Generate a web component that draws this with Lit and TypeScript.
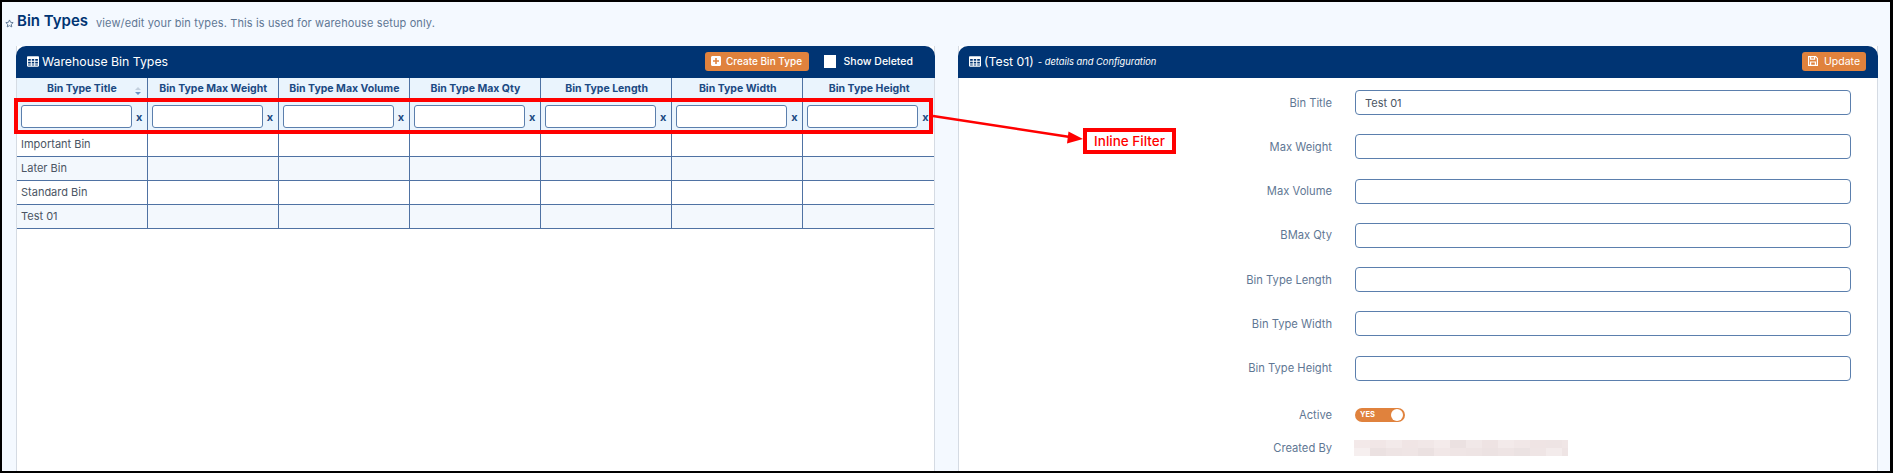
import { LitElement, html, css, svg } from "lit";
import { customElement } from "lit/decorators.js";

const COLS = ["Bin Type Title","Bin Type Max Weight","Bin Type Max Volume","Bin Type Max Qty","Bin Type Length","Bin Type Width","Bin Type Height"];
const ROWS = ["Important Bin","Later Bin","Standard Bin","Test 01"];
const FIELDS: [string,string][] = [["Bin Title","Test 01"],["Max Weight",""],["Max Volume",""],["BMax Qty",""],["Bin Type Length",""],["Bin Type Width",""],["Bin Type Height",""]];
const BLUR = ["#f3e9e9","#f1e6e6","#f3eaea","#f0e5e5","#f1e7e7","#f4ebeb","#ebe1e1","#f1e8e8","#eee3e3","#f3eaea","#f1e7e7","#efe4e4","#eee4e4","#f0e6e6",
"#f6efef","#ebe1e1","#eee4e4","#efe5e5","#ebe1e1","#f1e7e7","#efe5e5","#eee4e4","#ece2e2","#eee4e4","#ebe2e2","#efe5e5","#f3ebeb","#eee4e4"];

const tableIcon = svg`<svg class="ti" viewBox="0 0 14 12"><path fill="currentColor" fill-rule="evenodd" d="M1.2 0h11.6C13.5 0 14 .5 14 1.2v9.6c0 .7-.5 1.2-1.2 1.2H1.2C.5 12 0 11.500 0 10.800V1.200C0 .5.500 0 1.200 0zM1.300 3.200v2h3.100v-2zm4.300 0v2h2.800v-2zm4 0v2h3.100v-2zM1.300 6.300v2h3.100v-2zm4.300 0v2h2.800v-2zm4 0v2h3.100v-2zM1.300 9.400v1.300h3.100V9.400zm4.300 0v1.300h2.800V9.400zm4 0v1.300h3.100V9.400z"/></svg>`;

@customElement("app-root")
export class AppRoot extends LitElement {
  static styles = css`
    :host { display:block; position:relative; box-sizing:border-box; width:1893px; height:473px; overflow:hidden;
      background:#f4f9ff; border:solid #000; border-width:2px 3px 2px 2px; font-family:Inter,"Liberation Sans",sans-serif; color:#003473; }
    .top { display:flex; align-items:center; height:40px; padding-left:3px; box-sizing:border-box; }
    .star { width:9px; height:9px; margin-right:3px; margin-top:3px; color:#56708f; }
    h1 { margin:0; font-size:15px; line-height:20px; font-weight:600; color:#003473; margin-top:-2px; }
    .sub { margin-left:8px; font-size:11px; letter-spacing:.12px; color:#5f7794; margin-top:2px; }
    .cols { display:flex; gap:23px; margin:4px 12px 0 14px; align-items:stretch; }
    .panel { background:#fff; height:440px; box-sizing:border-box; border:solid #d5dbe3; border-width:0 1px; }
    .left { width:919px; flex:none; }
    .right { width:920px; flex:none; }
    .hdr { display:flex; align-items:center; height:32px; margin:0 -1px; padding:0 0 2px 11px; background:#003473; color:#fff; border-radius:10px 10px 0 0; font-size:12.300px; box-sizing:border-box; }
    .ti { width:12px; height:11px; margin-right:3px; flex:none; }
    .hdr .t { white-space:nowrap; }
    .hdr i { font-size:9.300px; margin-left:4px; white-space:nowrap; }
    .sp { flex:1; }
    .btn { display:flex; align-items:center; justify-content:center; gap:5px; height:19px; background:#e0823d; color:#fff; border:0; border-radius:3px; font:500 10px Inter,sans-serif; padding:0; }
    .create { width:104px; }
    .update { width:64px; margin-right:12px; font-size:10.500px; font-weight:400; gap:6px; }
    .btn svg { width:10px; height:10px; }
    .chk { width:12px; height:13px; background:#fff; margin:0 8px 0 15px; border:0; }
    .show { font-size:10.500px; font-weight:500; margin-right:22px; white-space:nowrap; }
    table { border-collapse:collapse; table-layout:fixed; width:917px; }
    th { height:20px; padding:0 0 0 1px; background:#eaf4fd; font-size:10.500px; font-weight:700; color:#1c4a83; border-left:1px solid #4f72a3; text-align:center; position:relative; white-space:nowrap; box-sizing:border-box; }
    th:first-child { border-left:0; padding:0; }
    .sort { position:absolute; right:6px; top:9px; width:6px; height:8px; }
    td.f { height:34px; padding:0; background:#eaf4fd; border-left:1px solid #4f72a3; box-sizing:border-box; }
    td.f:first-child { border-left:0; }
    .fw { display:flex; align-items:center; padding:3px 0 0 4px; font-size:11px; font-weight:700; color:#1c4a83; }
    .fw input { width:111px; height:23px; box-sizing:border-box; border:1px solid #5b7fad; border-radius:3px; background:#fff; margin:0 4px 0 0; padding:0; flex:none; }
    td.c { height:24px; padding:0 4px; font-size:11px; color:#4b5563; border-left:1px solid #4f72a3; border-bottom:1px solid #4f72a3; box-sizing:border-box; white-space:nowrap; }
    td.c:first-child { border-left:0; }
    tr.alt td.c { background:#f3f8fd; }
    .form { display:flex; flex-direction:column; gap:19.300px; padding-top:12px; }
    .row { display:grid; grid-template-columns:373px 496px; column-gap:23px; align-items:center; }
    .row label { text-align:right; font-size:11.200px; color:#5f7794; white-space:nowrap; }
    .row input { height:25px; box-sizing:border-box; border:1px solid #5b7fad; border-radius:4px; padding:0 9px; font:11px Inter,sans-serif; color:#4b5563; background:#fff; width:496px; }
    .active { margin-top:8px; }
    .created { margin-top:-1px; }
    .tog { position:relative; width:50px; height:14px; box-sizing:border-box; background:#e0823d; border-radius:7px; color:#fff; font-size:7.500px; font-weight:700; line-height:14px; padding-left:5px; }
    .tog i { position:absolute; right:2px; top:1px; width:12px; height:12px; background:#fff; border-radius:50%; }
    .blur { display:grid; grid-template-columns:repeat(14,16px); grid-auto-rows:8px; width:214px; overflow:hidden; margin-left:-1px; }
    .over { position:absolute; left:-2px; top:-2px; width:1893px; height:473px; pointer-events:none; }
    .redbox { position:absolute; left:14px; top:98px; width:919px; height:36px; box-sizing:border-box; border:4px solid #f00; }
    .tag { position:absolute; left:1083px; top:128px; width:93px; height:26px; box-sizing:border-box; border:4px solid #f00; background:#fff; color:#f00; font-size:13.500px; font-weight:500; display:flex; align-items:center; justify-content:center; }
    .arrow { position:absolute; left:0; top:0; width:1893px; height:473px; }
  `;

  render() {
    return html`
      <div class="top">
        <svg class="star" viewBox="0 0 24 24"><path fill="none" stroke="currentColor" stroke-width="2.400" d="M12 2.500l2.900 6.300 6.900.8-5.100 4.700 1.400 6.800-6.100-3.400-6.100 3.400 1.400-6.800-5.100-4.700 6.900-.8z"/></svg>
        <h1>Bin Types</h1>
        <span class="sub">view/edit your bin types. This is used for warehouse setup only.</span>
      </div>
      <div class="cols">
        <section class="panel left">
          <div class="hdr">${tableIcon}<span class="t">Warehouse Bin Types</span><span class="sp"></span>
            <button class="btn create"><svg viewBox="0 0 10 10"><path fill="#fff" fill-rule="evenodd" d="M1.500 0h7C9.300 0 10 .7 10 1.500v7c0 .8-.7 1.500-1.500 1.500h-7C.7 10 0 9.300 0 8.500v-7C0 .7.700 0 1.500 0zM4.200 2v2.200H2v1.600h2.200V8h1.600V5.800H8V4.200H5.800V2z"/></svg>Create Bin Type</button>
            <span class="chk"></span><span class="show">Show Deleted</span>
          </div>
          <table>
            <colgroup><col style="width:130px" />${COLS.slice(1).map(() => html`<col style="width:131px" />`)}</colgroup>
            <tr>${COLS.map((c, i) => html`<th>${c}${i === 0 ? html`<svg class="sort" viewBox="0 0 6 8"><path fill="#c3cfdd" d="M3 0l3 3H0z"/><path fill="#6d93c4" d="M3 8L0 5h6z"/></svg>` : ""}</th>`)}</tr>
            <tr>${COLS.map(() => html`<td class="f"><div class="fw"><input />x</div></td>`)}</tr>
            ${ROWS.map((r, ri) => html`<tr class=${ri % 2 ? "alt" : ""}>${COLS.map((_, i) => html`<td class="c">${i === 0 ? r : ""}</td>`)}</tr>`)}
          </table>
        </section>
        <section class="panel right">
          <div class="hdr">${tableIcon}<span class="t">(Test 01)</span><i>- details and Configuration</i><span class="sp"></span>
            <button class="btn update"><svg viewBox="0 0 10 10"><path fill="none" stroke="#fff" stroke-width="1.200" d="M.6.600h7l1.800 1.800v7H.6zM2.600.600v2.600h4V.600M2.600 9.400V6h4.800v3.400"/></svg>Update</button>
          </div>
          <div class="form">
            ${FIELDS.map(([l, v]) => html`<div class="row"><label>${l}</label><input .value=${v} /></div>`)}
            <div class="row active"><label>Active</label><div class="tog">YES<i></i></div></div>
            <div class="row created"><label>Created By</label><div class="blur">${BLUR.map(c => html`<span style="background:${c}"></span>`)}</div></div>
          </div>
        </section>
      </div>
      <div class="over">
        <div class="redbox"></div>
        <svg class="arrow" viewBox="0 0 1893 473"><path stroke="#f00" stroke-width="2.500" d="M933 116L1070 137"/><path fill="#f00" d="M1083 139L1067 143.500 1068.500 131.500z"/></svg>
        <div class="tag">Inline Filter</div>
      </div>
    `;
  }
}
